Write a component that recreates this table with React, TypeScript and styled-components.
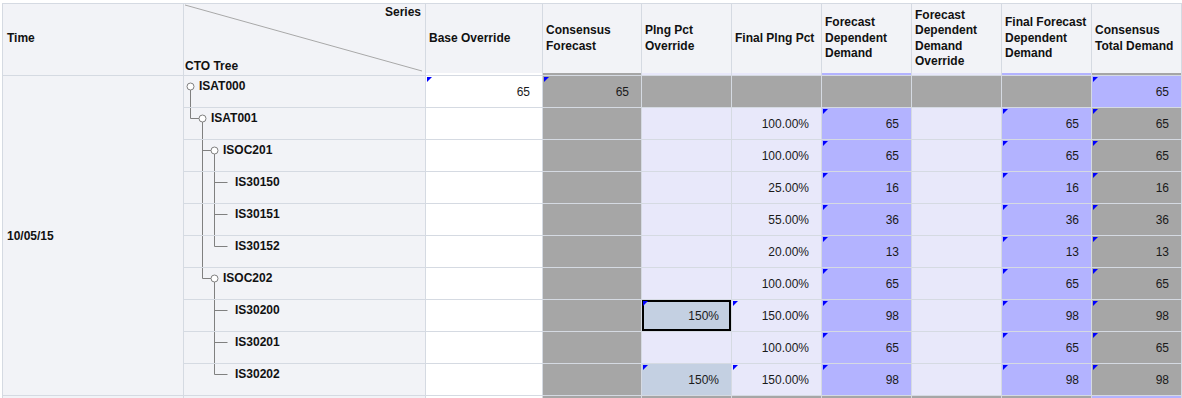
import React from "react";
import styled, { createGlobalStyle } from "styled-components";

type Fill = "head" | "white" | "gray" | "lav" | "blue" | "steel";

const fills: Record<Fill, string> = {
  head: "#f2f3f7",
  white: "#ffffff",
  gray: "#a6a6a6",
  lav: "#e8e8fa",
  blue: "#b3b3ff",
  steel: "#c4d0e2",
};

const GlobalStyle = createGlobalStyle`
  html, body {
    margin: 0;
    padding: 0;
    background: #fff;
  }
  body {
    font-family: "Liberation Sans", Arial, sans-serif;
    font-size: 12px;
    color: #111;
  }
`;

const Viewport = styled.div`
  height: 398px;
  overflow: hidden;
  padding: 3px 0 0 2px;
  box-sizing: border-box;
`;

const Grid = styled.div`
  display: grid;
  grid-template-columns: 181px 242px 117px 99px 90px 90px 90px 90px 90px 90px;
  grid-template-rows: 69px 3px repeat(10, 32px) 32px;
  width: max-content;
  border-top: 1px solid #d5dae2;
  border-left: 1px solid #d5dae2;
`;

const HeadCell = styled.div`
  box-sizing: border-box;
  background: ${fills.head};
  border-right: 1px solid #d5dae2;
  display: flex;
  align-items: center;
  padding: 0 3px;
  font-weight: bold;
  line-height: 15.5px;
  white-space: nowrap;
`;

const TimeHead = styled(HeadCell)`
  padding-left: 4px;
`;

const CornerHead = styled(HeadCell)`
  position: relative;
  flex-direction: column;
  align-items: stretch;
  justify-content: space-between;
  padding: 1px 4px 0 1px;
  line-height: 14px;
`;

const Diagonal = styled.svg`
  position: absolute;
  left: 0;
  top: 0;
`;

const SeriesLabel = styled.span`
  align-self: flex-end;
`;

const TreeLabel = styled.span`
  align-self: flex-start;
`;

const Cell = styled.div<{ $fill: Fill; $selected?: boolean }>`
  position: relative;
  box-sizing: border-box;
  background: ${(p) => fills[p.$fill]};
  border-right: 1px solid #d5dae2;
  border-bottom: 1px solid #d5dae2;
  display: flex;
  align-items: center;
  justify-content: flex-end;
  padding-right: 12px;
  color: #1a1a1a;
  box-shadow: ${(p) => (p.$selected ? "inset 0 0 0 2px #000" : "none")};
`;

const Marker = styled.span`
  position: absolute;
  left: 1px;
  top: 1px;
  width: 0;
  height: 0;
  border-top: 5px solid #0000ff;
  border-right: 5px solid transparent;
`;

const TimeCell = styled.div`
  grid-column: 1;
  grid-row: 3 / span 10;
  box-sizing: border-box;
  background: ${fills.head};
  border-right: 1px solid #d5dae2;
  border-bottom: 1px solid #d5dae2;
  display: flex;
  align-items: center;
  padding-left: 4px;
  font-weight: bold;
`;

const TreeCell = styled.div`
  box-sizing: border-box;
  background: ${fills.head};
  border-right: 1px solid #d5dae2;
  border-bottom: 1px solid #d5dae2;
  display: flex;
  align-items: flex-start;
`;

const NodeName = styled.span`
  font-weight: bold;
  line-height: 14px;
  padding-top: 3px;
`;

type Value = { fill: Fill; text?: string; marked?: boolean; selected?: boolean };

type TreeRow = {
  name: string;
  level: number;
  guides: boolean[];
  last: boolean;
  parent: boolean;
  values: Value[];
};

const topValues = (base: string, cf: string, total: string): Value[] => [
  { fill: "white", text: base, marked: true },
  { fill: "gray", text: cf, marked: true },
  { fill: "gray" },
  { fill: "gray" },
  { fill: "gray" },
  { fill: "gray" },
  { fill: "gray" },
  { fill: "blue", text: total, marked: true },
];

const childValues = (pct: string, demand: string, override?: string, selected?: boolean): Value[] => [
  { fill: "white" },
  { fill: "gray" },
  override
    ? { fill: "steel", text: override, marked: true, selected }
    : { fill: "lav" },
  { fill: "lav", text: pct, marked: !!override },
  { fill: "blue", text: demand, marked: true },
  { fill: "lav" },
  { fill: "blue", text: demand, marked: true },
  { fill: "gray", text: demand, marked: true },
];

const rows: TreeRow[] = [
  { name: "ISAT000", level: 0, guides: [], last: true, parent: true, values: topValues("65", "65", "65") },
  { name: "ISAT001", level: 1, guides: [], last: true, parent: true, values: childValues("100.00%", "65") },
  { name: "ISOC201", level: 2, guides: [false], last: false, parent: true, values: childValues("100.00%", "65") },
  { name: "IS30150", level: 3, guides: [false, true], last: false, parent: false, values: childValues("25.00%", "16") },
  { name: "IS30151", level: 3, guides: [false, true], last: false, parent: false, values: childValues("55.00%", "36") },
  { name: "IS30152", level: 3, guides: [false, true], last: true, parent: false, values: childValues("20.00%", "13") },
  { name: "ISOC202", level: 2, guides: [false], last: true, parent: true, values: childValues("100.00%", "65") },
  { name: "IS30200", level: 3, guides: [false, false], last: false, parent: false, values: childValues("150.00%", "98", "150%", true) },
  { name: "IS30201", level: 3, guides: [false, false], last: false, parent: false, values: childValues("100.00%", "65") },
  { name: "IS30202", level: 3, guides: [false, false], last: true, parent: false, values: childValues("150.00%", "98", "150%") },
];

const stripFills: Fill[] = ["white", "gray", "lav", "lav", "blue", "lav", "blue", "gray"];
const nextFills: Fill[] = ["white", "gray", "gray", "gray", "gray", "gray", "gray", "blue"];

const TreeGlyph = ({ level, guides, last, parent }: Omit<TreeRow, "name" | "values">) => {
  const x = (k: number) => 6.5 + 12 * k;
  const cx = x(level);
  const y = 10.5;
  return (
    <svg width={15 + 12 * level} height={31}>
      <g stroke="#808080" strokeWidth={1} fill="none">
        {guides.map((on, k) => on && <line key={k} x1={x(k)} y1={0} x2={x(k)} y2={31} />)}
        {level > 0 && <line x1={x(level - 1)} y1={0} x2={x(level - 1)} y2={last ? y : 31} />}
        {level > 0 && <line x1={x(level - 1)} y1={y} x2={parent ? cx - 3.5 : cx + 1} y2={y} />}
        {parent && <circle cx={cx} cy={y} r={3.5} fill="#fff" />}
        {parent && <line x1={cx} y1={y + 3.5} x2={cx} y2={31} />}
      </g>
    </svg>
  );
};

const headers: string[][] = [
  ["Base Override"],
  ["Consensus", "Forecast"],
  ["Plng Pct", "Override"],
  ["Final Plng Pct"],
  ["Forecast", "Dependent", "Demand"],
  ["Forecast", "Dependent", "Demand", "Override"],
  ["Final Forecast", "Dependent", "Demand"],
  ["Consensus", "Total Demand"],
];

export default function App() {
  return (
    <Viewport>
      <GlobalStyle />
      <Grid>
        <TimeHead>Time</TimeHead>
        <CornerHead>
          <Diagonal width={241} height={69}>
            <line x1={1} y1={1} x2={238} y2={67} stroke="#a8a8a8" strokeWidth={1} />
          </Diagonal>
          <SeriesLabel>Series</SeriesLabel>
          <TreeLabel>CTO Tree</TreeLabel>
        </CornerHead>
        {headers.map((lines, i) => (
          <HeadCell key={i}>
            <div>
              {lines.map((l, j) => (
                <div key={j}>{l}</div>
              ))}
            </div>
          </HeadCell>
        ))}

        <Cell $fill="head" />
        <Cell $fill="head" />
        {stripFills.map((f, i) => (
          <Cell key={i} $fill={f} />
        ))}

        <TimeCell>10/05/15</TimeCell>
        {rows.map((r) => (
          <React.Fragment key={r.name}>
            <TreeCell>
              <TreeGlyph level={r.level} guides={r.guides} last={r.last} parent={r.parent} />
              <NodeName>{r.name}</NodeName>
            </TreeCell>
            {r.values.map((v, i) => (
              <Cell key={i} $fill={v.fill} $selected={v.selected}>
                {v.marked && <Marker />}
                {v.text}
              </Cell>
            ))}
          </React.Fragment>
        ))}

        <Cell $fill="head" />
        <Cell $fill="head" />
        {nextFills.map((f, i) => (
          <Cell key={i} $fill={f} />
        ))}
      </Grid>
    </Viewport>
  );
}
